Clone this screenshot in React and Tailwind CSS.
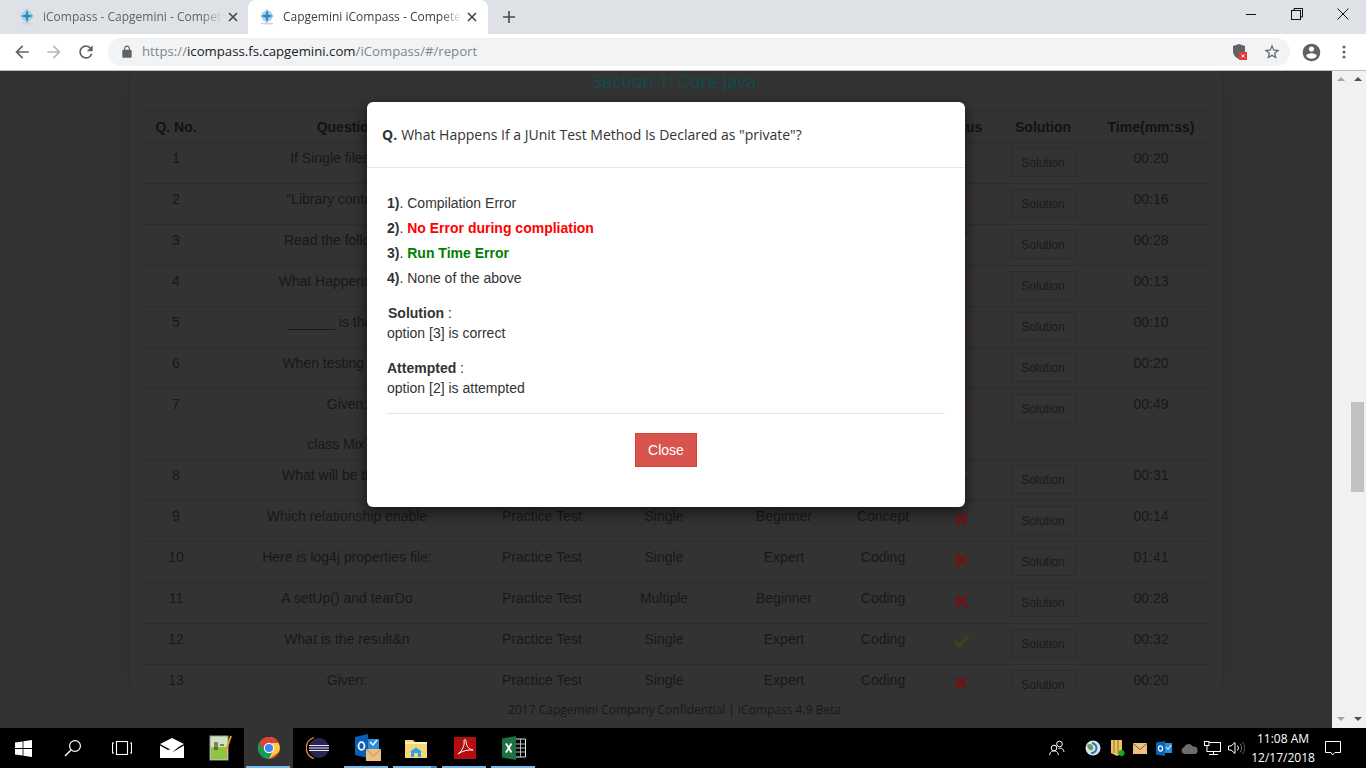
import React from "react";

const COLS = [72, 270, 120, 124, 116, 82, 74, 90, 122];
const HEADS = ["Q. No.", "Question", "Test Type", "Type", "Level", "Category", "Status", "Solution", "Time(mm:ss)"];
const ROWS = [
  [1, "If Single files in an", "Practice Test", "Single", "Beginner", "Concept", true, "00:20"],
  [2, "\"Library contains all", "Practice Test", "Single", "Beginner", "Concept", false, "00:16"],
  [3, "Read the following c", "Practice Test", "Single", "Expert", "Coding", true, "00:28"],
  [4, "What Happens If a JU", "Practice Test", "Single", "Expert", "Concept", false, "00:13"],
  [5, "______ is the tests", "Practice Test", "Single", "Beginner", "Concept", false, "00:10"],
  [6, "When testing a class", "Practice Test", "Single", "Beginner", "Concept", false, "00:20"],
  [7, <>Given:<br /><br />class MixTes</>, "Practice Test", "Single", "Expert", "Coding", false, "00:49"],
  [8, "What will be the outp", "Practice Test", "Single", "Expert", "Coding", true, "00:31"],
  [9, "Which relationship enable", "Practice Test", "Single", "Beginner", "Concept", false, "00:14"],
  [10, "Here is log4j properties file:", "Practice Test", "Single", "Expert", "Coding", false, "01:41"],
  [11, "A setUp() and tearDo", "Practice Test", "Multiple", "Beginner", "Coding", false, "00:28"],
  [12, "What is the result&n", "Practice Test", "Single", "Expert", "Coding", true, "00:32"],
  [13, "Given:", "Practice Test", "Single", "Expert", "Coding", false, "00:20"],
];

const Mat = ({ d, size = 24, className = "" }) => (
  <svg width={size} height={size} viewBox="0 0 24 24" fill="currentColor" className={className}><path d={d} /></svg>
);

const Favicon = ({ className = "" }) => (
  <svg width="18" height="18" viewBox="0 0 18 18" className={className}>
    <ellipse cx="9" cy="15.5" rx="6.5" ry="1" fill="#d3d6da" />
    <circle cx="9" cy="8" r="5.6" fill="#a9cfe8" />
    <path d="M9 0.5 L10.2 6.8 L16 8 L10.2 9.2 L9 15.5 L7.8 9.2 L2 8 L7.8 6.8 Z" fill="#3b7aa8" />
    <circle cx="9" cy="8" r="2" fill="#0a9ad8" />
  </svg>
);

const TabClose = ({ className = "" }) => (
  <svg width="10" height="10" viewBox="0 0 10 10" className={className}>
    <path d="M1 1 L9 9 M9 1 L1 9" stroke="#45494e" strokeWidth="1.7" />
  </svg>
);

const Ok = () => (
  <svg width="16" height="14" viewBox="0 0 16 14" className="block">
    <path d="M0.5 7.5 L3 5 L6 8 L13 0.8 L15.5 3.3 L6 13 Z" fill="#32491a" />
  </svg>
);
const Cross = () => (
  <svg width="14" height="14" viewBox="0 0 14 14" className="block">
    <path d="M0.5 2.8 L2.8 0.5 L7 4.7 L11.2 0.5 L13.5 2.8 L9.3 7 L13.5 11.2 L11.2 13.5 L7 9.3 L2.8 13.5 L0.5 11.2 L4.7 7 Z" fill="#6e1414" />
  </svg>
);

function Tab({ active, title, width }) {
  return (
    <div className={`flex items-center h-[34px] shrink-0 ${width} ${active ? "bg-white rounded-t-lg pl-[10px] pr-[11px]" : "pl-[18px] pr-[10px]"}`}>
      <Favicon className="shrink-0" />
      <div className={`ml-[7px] flex-1 overflow-hidden whitespace-nowrap text-[12px] [mask-image:linear-gradient(to_right,black_88%,transparent)] ${active ? "text-[#3c4043]" : "text-[#5f6368]"}`}>
        {title}
      </div>
      <TabClose className="ml-[5px] shrink-0" />
    </div>
  );
}

const TaskItem = ({ children, active, line, split }) => (
  <div className={`relative w-[49px] h-10 shrink-0 flex items-center justify-center ${active ? "bg-[#333333]" : ""}`}>
    {children}
    {line && <div className="absolute bottom-0 left-[2px] right-[3px] h-[2px] bg-[#76b9ed]" />}
    {split && <div className="absolute bottom-0 right-[3px] w-[6px] h-[2px] bg-[#4d84ad]" />}
  </div>
);

function Scrollbar({ up, thumb }) {
  return (
    <div className="relative w-[17px] bg-[#f1f1f1] flex flex-col justify-between items-center py-[6px]">
      <div className="w-0 h-0 border-x-[4px] border-x-transparent border-b-[4px]" style={{ borderBottomColor: up }} />
      {thumb && <div className="absolute left-[2px] top-[331px] w-[13px] h-[90px] bg-[#c1c1c1]" />}
      <div className="w-0 h-0 border-x-[4px] border-x-transparent border-t-[4px] mb-[1px]" style={{ borderTopColor: up }} />
    </div>
  );
}

function Modal() {
  return (
    <div className="absolute left-[367px] top-[31px] w-[598px] h-[405px] bg-white rounded-md shadow-[0_5px_15px_rgba(0,0,0,0.6)] text-[#333333]">
      <div className="h-[66px] border-b border-[#e5e5e5] pl-[15px] flex items-center font-['Open_Sans',sans-serif] text-[14px]">
        <b className="font-bold mr-[4px]">Q.</b> What Happens If a JUnit Test Method Is Declared as "private"?
      </div>
      <div className="px-5 pt-[23px] font-['Liberation_Sans',sans-serif] text-[14px] leading-[25px]">
        <div><b>1)</b>. Compilation Error</div>
        <div><b>2)</b>. <b className="text-[#ff0000]">No Error during compliation</b></div>
        <div><b>3)</b>. <b className="text-[#008000]">Run Time Error</b></div>
        <div><b>4)</b>. None of the above</div>
        <div className="mt-[12px] leading-[20px] pl-px"><b>Solution</b> :</div>
        <div className="leading-[20px]">option [3] is correct</div>
        <div className="mt-[15px] leading-[20px]"><b>Attempted</b> :</div>
        <div className="leading-[20px]">option [2] is attempted</div>
        <div className="mt-[15px] border-t border-[#e5e5e5] flex justify-center pt-[19px]">
          <div className="w-[62px] h-[34px] bg-[#d9534f] border border-[#d43f3a] text-white flex items-center justify-center leading-none">Close</div>
        </div>
      </div>
    </div>
  );
}

function Page() {
  return (
    <div className="relative w-[1332px] flex flex-col bg-[#333333]">
      <div className="h-[621px] overflow-hidden">
        <div className="ml-[130px] w-[1092px] h-[620px] shadow-[0_0_18px_rgba(0,0,0,0.12)] overflow-hidden">
          <div className="w-[1089px] h-[39px] text-center font-['Open_Sans',sans-serif] text-[18px] leading-[20px] text-[#0c4d4d]">Section 1: Core Java</div>
          <table className="ml-[10px] w-[1070px] table-fixed border-collapse font-['Liberation_Sans',sans-serif] text-[14px] text-[#181818]">
            <colgroup>{COLS.map((w, i) => <col key={i} style={{ width: w }} />)}</colgroup>
            <thead>
              <tr className="h-[32px]">
                {HEADS.map((h, i) => (
                  <th key={h} className={`border-y border-[#2d2d2d] pt-[2px] font-bold text-[#121212] text-center whitespace-nowrap ${i === 8 ? "pl-1" : ""}`}>{h}</th>
                ))}
              </tr>
            </thead>
            <tbody>
              {ROWS.map((r) => (
                <tr key={r[0]} className="border-b border-[#2d2d2d] align-top">
                  <td className="text-center pt-[5px] leading-5 h-[41px]">{r[0]}</td>
                  <td className="text-center pt-[5px] pb-[5px] leading-5 whitespace-nowrap">{r[1]}</td>
                  <td className="text-center pt-[5px] leading-5">{r[2]}</td>
                  <td className="text-center pt-[5px] leading-5">{r[3]}</td>
                  <td className="text-center pt-[5px] leading-5">{r[4]}</td>
                  <td className="text-center pt-[5px] leading-5">{r[5]}</td>
                  <td className="pt-[11px]"><div className="flex justify-center">{r[6] ? <Ok /> : <Cross />}</div></td>
                  <td className="pt-[5px]">
                    <div className="mx-auto w-[65px] h-[29px] border border-[#2b2b2b] flex items-center justify-center text-[12px] text-[#1a1a1a]">Solution</div>
                  </td>
                  <td className="text-center pt-[5px] pl-1 leading-5">{r[7]}</td>
                </tr>
              ))}
            </tbody>
          </table>
        </div>
      </div>
      <div className="h-[36px] ml-[130px] w-[1089px] flex items-center justify-center font-['Open_Sans',sans-serif] text-[12px] text-[#181818]">
        2017 Capgemini Company Confidential | iCompass 4.9 Beta
      </div>
      <Modal />
    </div>
  );
}

function Taskbar() {
  return (
    <div className="h-10 bg-black flex items-center text-white shrink-0">
      <div className="-ml-px flex">
        <TaskItem>
          <svg width="17" height="17" viewBox="0 0 17 17" fill="#fff"><path d="M0 2.5 L7.6 1.4 V8 H0 Z M8.4 1.3 L17 0 V8 H8.4 Z M0 9 H7.6 V15.6 L0 14.5 Z M8.4 9 H17 V17 L8.4 15.7 Z" /></svg>
        </TaskItem>
        <TaskItem>
          <svg width="18" height="18" viewBox="0 0 18 18" fill="none" stroke="#fff" strokeWidth="1.2"><circle cx="11" cy="7" r="5.4" /><path d="M7 11 L1 17" strokeWidth="1.5" /></svg>
        </TaskItem>
        <TaskItem>
          <svg width="20" height="14" viewBox="0 0 20 14" fill="none" stroke="#fff" strokeWidth="1.1"><rect x="4.5" y="0.5" width="11" height="13" /><path d="M2 2 H0.5 V12 H2 M18 2 H19.5 V12 H18" /></svg>
        </TaskItem>
        <TaskItem>
          <svg width="24" height="20" viewBox="0 0 24 20" className="translate-x-px"><path d="M0 6 L12 0 L24 6 L12 12.5 Z" fill="#fff" /><path d="M0 7.5 L8 12 L19 8.5 L12 14.5 L24 7.5 V20 H0 Z" fill="#fff" /></svg>
        </TaskItem>
        <TaskItem>
          <svg width="24" height="26" viewBox="0 0 24 26" className="translate-x-px">
            <rect x="1" y="1" width="18" height="24" fill="#cfe3c0" stroke="#9a9a9a" />
            <rect x="2" y="12" width="16" height="12" fill="#8fc63e" />
            <path d="M6 7 V15 M8 7 V15 M11 10 H15" stroke="#222" strokeWidth="1" />
            <path d="M22 1 L16 18" stroke="#e0a030" strokeWidth="2" />
          </svg>
        </TaskItem>
        <TaskItem active line>
          <svg width="24" height="24" viewBox="0 0 24 24">
            <circle cx="12" cy="12" r="11" fill="#db4437" />
            <path d="M12 12 L2.5 6.5 A11 11 0 0 0 12 23 L17.5 13 Z" fill="#0f9d58" />
            <path d="M12 1 A11 11 0 0 1 22 16 L12 23 L17 12 Z" fill="#ffcd40" />
            <path d="M12 1 A11 11 0 0 0 2.5 6.5 L7 13 L12 7 H22 A11 11 0 0 0 12 1 Z" fill="#db4437" />
            <circle cx="12" cy="12" r="5.2" fill="#fff" />
            <circle cx="12" cy="12" r="4.1" fill="#4285f4" />
          </svg>
        </TaskItem>
        <TaskItem>
          <svg width="24" height="24" viewBox="0 0 24 24">
            <path d="M8 1.5 A11 11 0 0 0 8 22.5" fill="none" stroke="#f7941e" strokeWidth="1.3" />
            <circle cx="13" cy="12" r="10" fill="#2c2255" />
            <path d="M3 9.5 H23 M3 12 H23 M3 14.5 H23" stroke="#e8e8f0" strokeWidth="1.2" />
          </svg>
        </TaskItem>
        <TaskItem line>
          <svg width="26" height="28" viewBox="0 0 26 28" className="translate-x-px">
            <path d="M0 3 L13 0 V24 L0 21 Z" fill="#0a5fb4" />
            <path d="M13 5 H24 V15 H13 Z" fill="#2a8ddc" />
            <path d="M15 8 L18 11 L22 6" stroke="#fff" strokeWidth="1.3" fill="none" />
            <ellipse cx="6.5" cy="12" rx="3" ry="3.8" fill="none" stroke="#fff" strokeWidth="1.7" />
            <rect x="11" y="15" width="15" height="12" fill="#edc07f" />
            <path d="M11 15 L18.5 22 L26 15" fill="none" stroke="#b98d50" strokeWidth="1" />
          </svg>
        </TaskItem>
        <TaskItem line split>
          <svg width="22" height="20" viewBox="0 0 22 20">
            <path d="M0 2 H8 L10 4 H22 V20 H0 Z" fill="#f6d67a" />
            <path d="M0 4 H22 V6 H0 Z" fill="#fff1b8" />
            <path d="M6 19 V13 L11 9.5 L16 13 V19 H13 V15 H9 V19 Z" fill="#2aa7e8" />
          </svg>
        </TaskItem>
        <TaskItem line>
          <svg width="22" height="22" viewBox="0 0 22 22">
            <rect width="22" height="22" fill="#b50e0e" />
            <path d="M4 17 C8 14 11 8 10 4 C10 2 12 2 12 4 C12 8 14 12 19 13 C14 12.5 8 14 4 17 Z" fill="none" stroke="#fff" strokeWidth="1" />
          </svg>
        </TaskItem>
        <TaskItem line>
          <svg width="24" height="24" viewBox="0 0 24 24">
            <path d="M0 2.5 L14 0 V24 L0 21.5 Z" fill="#1d7044" />
            <path d="M14 3 H23.5 V21 H14" fill="none" stroke="#dfe8df" strokeWidth="1" />
            <path d="M14 8 H23 M14 12 H23 M14 16 H23 M18.5 3 V21" stroke="#dfe8df" strokeWidth="0.8" />
            <path d="M4 7.5 L9.5 16.5 M9.5 7.5 L4 16.5" stroke="#fff" strokeWidth="1.9" />
          </svg>
        </TaskItem>
      </div>

      <div className="ml-auto flex items-center h-10">
        <svg width="16" height="16" viewBox="0 0 16 16" fill="none" stroke="#fff" strokeWidth="1" className="mr-[20px]"><circle cx="10.5" cy="4" r="2.8" /><circle cx="5" cy="8" r="2.8" /><path d="M0.7 15 C1 11.5 3 11 5 11 C7 11 9 11.5 9.3 15 M9.5 8.5 C12 7.5 14.5 8.5 15 12" /></svg>
        <svg width="16" height="16" viewBox="0 0 16 16" className="mr-[10px]"><circle cx="8" cy="8" r="7.5" fill="#d9e6ea" /><path d="M2 5 C6 2 9 6 8 9 C6 12 3 10 2 5 Z" fill="#6c9a62" /><path d="M7 3 A5 5 0 1 1 6 13" fill="none" stroke="#2b70b8" strokeWidth="2" /></svg>
        <svg width="14" height="17" viewBox="0 0 14 17" className="mr-[8px]"><path d="M0 0 H11 V13 L6 16 L0 13 Z" fill="#ecc35f" /><path d="M3 0 V13 M7 0 V14" stroke="#8b7130" strokeWidth="1" /><circle cx="10.5" cy="13" r="3" fill="#18a81f" /></svg>
        <svg width="14" height="11" viewBox="0 0 14 11" className="mr-[9px]"><rect width="14" height="11" fill="#edc07f" /><path d="M0 0.5 L7 6.5 L14 0.5" fill="none" stroke="#7d5e30" strokeWidth="1" /></svg>
        <svg width="16" height="15" viewBox="0 0 16 15" className="mr-[9px]"><rect x="6" y="2" width="10" height="10" fill="#2a8ddc" /><path d="M0 1.5 L9 0 V15 L0 13.5 Z" fill="#0a64b8" /><ellipse cx="4.5" cy="7.5" rx="2" ry="2.7" fill="none" stroke="#fff" strokeWidth="1.2" /><path d="M10 6 L12 8.5 L15 4" stroke="#fff" strokeWidth="1" fill="none" /></svg>
        <svg width="17" height="11" viewBox="0 0 17 11" className="mr-[6px]"><path d="M3.5 11 A3.5 3.5 0 0 1 3 4.2 A5 5 0 0 1 12 3.5 A3.8 3.8 0 0 1 13.5 11 Z" fill="#6d6d6d" /></svg>
        <svg width="17" height="15" viewBox="0 0 17 15" fill="none" stroke="#fff" strokeWidth="1" className="mr-[7px]"><rect x="3" y="1.5" width="13.5" height="9" /><rect x="0.5" y="0.5" width="4.5" height="4" fill="#000" /><path d="M9.5 10.5 V13.5 M5 13.5 H14" /></svg>
        <svg width="17" height="14" viewBox="0 0 17 14" fill="none" stroke="#fff" strokeWidth="1" className="mr-[9px]"><path d="M0.5 5 H3 L7 1.5 V12.5 L3 9 H0.5 Z" /><path d="M9.5 4.5 A4 4 0 0 1 9.5 9.5" /><path d="M12 2.5 A7 7 0 0 1 12 11.5" stroke="#777" /><path d="M14.5 1 A9 9 0 0 1 14.5 13" stroke="#555" /></svg>
        <div className="w-[58px] text-center text-[12px] leading-[19px] font-['Open_Sans',sans-serif] text-white whitespace-nowrap flex flex-col items-center">
          <span>11:08 AM</span>
          <span>12/17/2018</span>
        </div>
        <svg width="16" height="15" viewBox="0 0 16 15" fill="none" stroke="#fff" strokeWidth="1" className="ml-[13px] mr-[25px]"><path d="M0.5 0.5 H15.5 V11.5 H10 L7.5 14 L6 11.5 H0.5 Z" /></svg>
      </div>
    </div>
  );
}

export default function App() {
  return (
    <div className="w-[1366px] h-[768px] overflow-hidden flex flex-col bg-black font-['Open_Sans',sans-serif]">
      <div className="h-[34px] bg-[#dee1e6] flex items-start shrink-0">
        <Tab title="iCompass - Capgemini - Competency" width="w-[248px]" />
        <Tab active title="Capgemini iCompass - Competency" width="w-[240px]" />
        <svg width="14" height="14" viewBox="0 0 14 14" className="ml-[14px] mt-[10px]"><path d="M7 1 V13 M1 7 H13" stroke="#45494e" strokeWidth="1.6" /></svg>
        <div className="ml-auto flex items-center h-[28px]">
          <svg width="12" height="12" viewBox="0 0 12 12" className="mr-[34px]"><path d="M1 6.5 H11" stroke="#111" strokeWidth="1" /></svg>
          <svg width="12" height="12" viewBox="0 0 12 12" fill="none" stroke="#111" strokeWidth="1" className="mr-[34px]"><rect x="0.5" y="2.5" width="9" height="9" /><path d="M3 2.5 V0.5 H11.5 V9 H9.5" /></svg>
          <svg width="12" height="12" viewBox="0 0 12 12" className="mr-[17px]"><path d="M0.5 0.5 L11.5 11.5 M11.5 0.5 L0.5 11.5" stroke="#111" strokeWidth="1" /></svg>
        </div>
      </div>
      <div className="h-[37px] bg-white border-b border-[#bdbdbd] flex items-center shrink-0">
        <Mat size={20} className="ml-[12px] text-[#5f6368] " d="M20 11H7.83l5.59-5.59L12 4l-8 8 8 8 1.41-1.41L7.83 13H20v-2z" />
        <Mat size={20} className="ml-[12px] text-[#b4b7bb]" d="M4 11h12.17l-5.59-5.59L12 4l8 8-8 8-1.41-1.41L16.17 13H4v-2z" />
        <Mat size={20} className="ml-[12px] text-[#5f6368]" d="M17.65 6.35A7.958 7.958 0 0 0 12 4c-4.42 0-7.99 3.58-7.99 8s3.57 8 7.99 8c3.73 0 6.84-2.55 7.73-6h-2.08A5.99 5.99 0 0 1 12 18c-3.31 0-6-2.69-6-6s2.69-6 6-6c1.66 0 3.14.69 4.22 1.78L13 11h7V4l-2.35 2.35z" />
        <div className="ml-[12px] w-[1182px] h-[28px] bg-[#f1f3f4] rounded-full flex items-center pl-[12px] pr-[9px]">
          <Mat size={14} className="text-[#5f6368]" d="M18 8h-1V6c0-2.76-2.24-5-5-5S7 3.24 7 6v2H6c-1.1 0-2 .9-2 2v10c0 1.1.9 2 2 2h12c1.1 0 2-.9 2-2V10c0-1.1-.9-2-2-2zM9 6c0-1.66 1.34-3 3-3s3 1.34 3 3v2H9V6z" />
          <div className="ml-[8px] text-[13.2px] whitespace-nowrap text-[#80868b]">
            https://<span className="text-[#202124]">icompass.fs.capgemini.com</span>/iCompass/#/report
          </div>
          <div className="ml-auto flex items-center">
            <svg width="14" height="16" viewBox="0 0 14 16" className="mr-[16px]">
              <path d="M6 0 L12 2 V7 C12 11 9 14 6 15 C3 14 0 11 0 7 V2 Z" fill="#5f6368" />
              <rect x="6" y="8" width="8" height="8" fill="#e53935" />
              <path d="M8.5 10.5 L11.5 13.5 M11.5 10.5 L8.5 13.5" stroke="#fff" strokeWidth="1" />
            </svg>
            <Mat size={18} className="text-[#5f6368]" d="M22 9.24l-7.19-.62L12 2 9.19 8.63 2 9.24l5.46 4.73L5.82 21 12 17.27 18.18 21l-1.63-7.03L22 9.24zM12 15.4l-3.76 2.27 1-4.28-3.32-2.88 4.38-.38L12 6.1l1.71 4.04 4.38.38-3.32 2.88 1 4.28L12 15.4z" />
          </div>
        </div>
        <Mat size={21} className="ml-[11px] text-[#5f6368]" d="M12 2C6.48 2 2 6.48 2 12s4.48 10 10 10 10-4.48 10-10S17.52 2 12 2zm0 3c1.66 0 3 1.34 3 3s-1.34 3-3 3-3-1.34-3-3 1.34-3 3-3zm0 14.2c-2.5 0-4.71-1.28-6-3.22.03-1.99 4-3.08 6-3.08 1.99 0 5.97 1.09 6 3.08-1.29 1.94-3.5 3.22-6 3.22z" />
        <svg width="4" height="14" viewBox="0 0 4 14" className="ml-[20px]" fill="#5f6368"><circle cx="2" cy="2" r="1.5" /><circle cx="2" cy="7" r="1.5" /><circle cx="2" cy="12" r="1.5" /></svg>
      </div>
      <div className="flex h-[657px] shrink-0">
        <Page />
        <Scrollbar up="#a3a3a3" />
        <Scrollbar up="#505050" thumb />
      </div>
      <Taskbar />
    </div>
  );
}
